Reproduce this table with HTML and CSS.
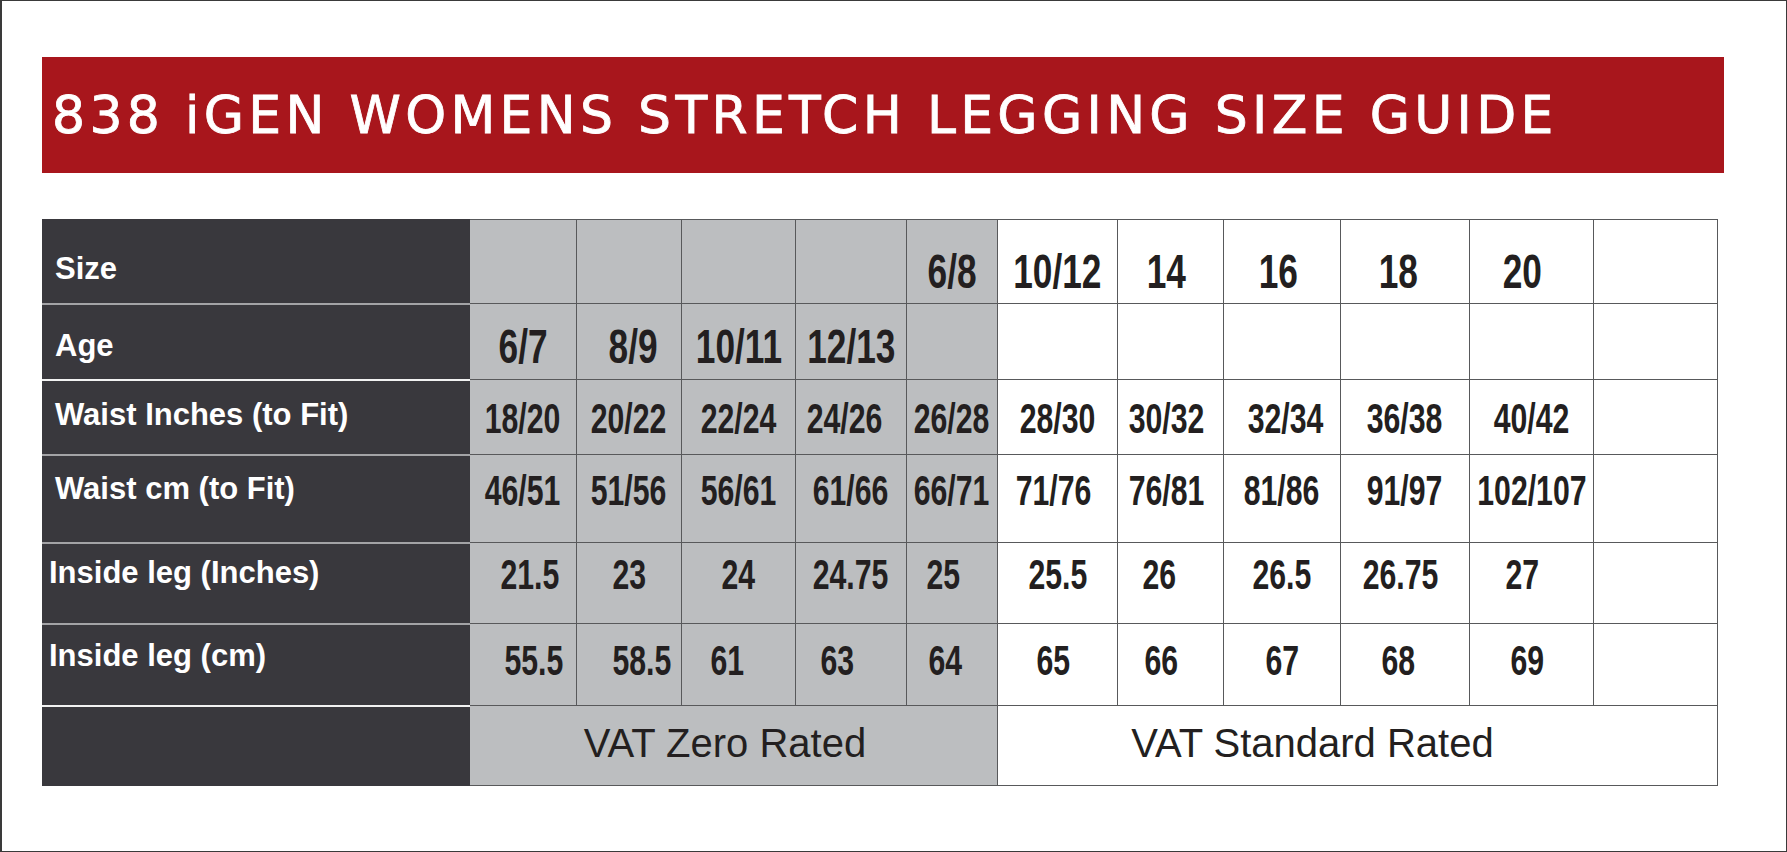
FILE: index.html
```html
<!DOCTYPE html>
<html lang="en">
<head>
<meta charset="utf-8">
<title>838 iGEN Womens Stretch Legging Size Guide</title>
<link rel="stylesheet" href="styles.css">
</head>
<body>
<div class="frame">
  <header class="banner">
    <h1 class="title">838 iGEN WOMENS STRETCH LEGGING SIZE GUIDE</h1>
  </header>

  <div class="chart">
    <div class="row row-size">
      <div class="label">Size</div>
      <div class="cell zero first"></div>
      <div class="cell zero"></div>
      <div class="cell zero"></div>
      <div class="cell zero"></div>
      <div class="cell zero"><span class="num">6/8</span></div>
      <div class="cell std"><span class="num">10/12</span></div>
      <div class="cell std dl0"><span class="num">14</span></div>
      <div class="cell std dl0"><span class="num">16</span></div>
      <div class="cell std dl1"><span class="num">18</span></div>
      <div class="cell std dl2"><span class="num">20</span></div>
      <div class="cell std end"></div>
    </div>

    <div class="row row-age">
      <div class="label sep">Age</div>
      <div class="cell zero first"><span class="num">6/7</span></div>
      <div class="cell zero dr0"><span class="num">8/9</span></div>
      <div class="cell zero"><span class="num">10/11</span></div>
      <div class="cell zero"><span class="num">12/13</span></div>
      <div class="cell zero"></div>
      <div class="cell std"></div>
      <div class="cell std"></div>
      <div class="cell std"></div>
      <div class="cell std"></div>
      <div class="cell std"></div>
      <div class="cell std end"></div>
    </div>

    <div class="row row-win">
      <div class="label sep sep-light">Waist Inches (to Fit)</div>
      <div class="cell zero first"><span class="num">18/20</span></div>
      <div class="cell zero"><span class="num">20/22</span></div>
      <div class="cell zero"><span class="num">22/24</span></div>
      <div class="cell zero dl1"><span class="num">24/26</span></div>
      <div class="cell zero"><span class="num">26/28</span></div>
      <div class="cell std"><span class="num">28/30</span></div>
      <div class="cell std dl0"><span class="num">30/32</span></div>
      <div class="cell std dr0"><span class="num">32/34</span></div>
      <div class="cell std"><span class="num">36/38</span></div>
      <div class="cell std"><span class="num">40/42</span></div>
      <div class="cell std end"></div>
    </div>

    <div class="row row-wcm">
      <div class="label sep">Waist cm (to Fit)</div>
      <div class="cell zero first"><span class="num">46/51</span></div>
      <div class="cell zero"><span class="num">51/56</span></div>
      <div class="cell zero"><span class="num">56/61</span></div>
      <div class="cell zero"><span class="num">61/66</span></div>
      <div class="cell zero"><span class="num">66/71</span></div>
      <div class="cell std dl0"><span class="num">71/76</span></div>
      <div class="cell std dl0"><span class="num">76/81</span></div>
      <div class="cell std"><span class="num">81/86</span></div>
      <div class="cell std"><span class="num">91/97</span></div>
      <div class="cell std"><span class="num">102/107</span></div>
      <div class="cell std end"></div>
    </div>

    <div class="row row-lin">
      <div class="label sep inset">Inside leg (Inches)</div>
      <div class="cell zero first dr1"><span class="num">21.5</span></div>
      <div class="cell zero"><span class="num">23</span></div>
      <div class="cell zero"><span class="num">24</span></div>
      <div class="cell zero"><span class="num">24.75</span></div>
      <div class="cell zero dl2"><span class="num">25</span></div>
      <div class="cell std"><span class="num">25.5</span></div>
      <div class="cell std dl3"><span class="num">26</span></div>
      <div class="cell std"><span class="num">26.5</span></div>
      <div class="cell std dl0"><span class="num">26.75</span></div>
      <div class="cell std dl2"><span class="num">27</span></div>
      <div class="cell std end"></div>
    </div>

    <div class="row row-lcm">
      <div class="label sep inset">Inside leg (cm)</div>
      <div class="cell zero first dr2"><span class="num">55.5</span></div>
      <div class="cell zero dr3"><span class="num">58.5</span></div>
      <div class="cell zero dl3"><span class="num">61</span></div>
      <div class="cell zero dl4"><span class="num">63</span></div>
      <div class="cell zero dl1"><span class="num">64</span></div>
      <div class="cell std dl0"><span class="num">65</span></div>
      <div class="cell std dl2"><span class="num">66</span></div>
      <div class="cell std"><span class="num">67</span></div>
      <div class="cell std dl1"><span class="num">68</span></div>
      <div class="cell std dl0"><span class="num">69</span></div>
      <div class="cell std end"></div>
    </div>

    <div class="row row-vat">
      <div class="label sep sep-light"></div>
      <div class="cell zero first span-zero">VAT Zero Rated</div>
      <div class="cell std end span-std">VAT Standard Rated</div>
    </div>
  </div>
</div>
</body>
</html>
```

FILE: styles.css
```css
* {
  box-sizing: border-box;
}

html,
body {
  margin: 0;
  padding: 0;
  background: #ffffff;
}

.frame {
  width: 1787px;
  height: 852px;
  border: 1px solid #3a3a3a;
  border-left-width: 2px;
  padding: 56px 0 0 40px;
  background: #ffffff;
}

/* ---------- Title banner ---------- */
.banner {
  width: 1682px;
  height: 116px;
  background: #a8161c;
  display: flex;
  align-items: center;
  padding-left: 10px;
}

.title {
  margin: 0;
  color: #ffffff;
  font-family: "DejaVu Sans", "Liberation Sans", sans-serif;
  font-weight: 400;
  font-size: 52px;
  line-height: 1;
  letter-spacing: 4.3px;
  white-space: nowrap;
  -webkit-text-stroke: 0.8px #ffffff;
}

/* ---------- Size chart ---------- */
.chart {
  margin-top: 46px;
  width: 1676px;
  display: grid;
  grid-template-columns: 428px 106px 105px 114px 111px 91px 120px 106px 117px 129px 124px 125px;
  grid-template-rows: 84px 76px 75px 88px 81px 82px 81px;
}

.row {
  display: contents;
}

.label {
  background: #39383d;
  color: #ffffff;
  font-family: "Liberation Sans", Arial, sans-serif;
  font-weight: 700;
  font-size: 31px;
  line-height: 1;
  display: flex;
  align-items: center;
  padding-left: 13px;
  white-space: nowrap;
}

.label.inset {
  padding-left: 7px;
}

.label.sep {
  border-top: 2px solid #a3a3a6;
}

.label.sep-light {
  border-top-color: #f2f2f2;
}

.cell {
  display: flex;
  align-items: center;
  justify-content: center;
  border-top: 1px solid #58595b;
  border-left: 1px solid #58595b;
  color: #231f20;
  font-family: "Liberation Sans", Arial, sans-serif;
  font-weight: 700;
  font-size: 42px;
  line-height: 1;
  white-space: nowrap;
}

.cell.first {
  border-left: 0;
}

.cell.end {
  border-right: 1px solid #58595b;
}

.zero {
  background: #bcbec0;
}

.std {
  background: #ffffff;
}

.num {
  display: inline-block;
  transform: scaleX(0.72);
}

/* row specific type size and vertical placement */
.row-size .cell,
.row-age .cell {
  font-size: 49px;
}

.row-size .label { padding-top: 15px; }
.row-size .cell { padding-top: 20px; }

.row-age .label { padding-top: 6px; }
.row-age .cell { padding-top: 10px; }

.row-win .label { padding-bottom: 7px; }
.row-win .cell { padding-top: 3px; }

.row-wcm .label { padding-bottom: 22px; }
.row-wcm .cell { padding-bottom: 16px; }

.row-lin .label { padding-bottom: 23px; }
.row-lin .cell { padding-bottom: 16px; }

.row-lcm .label { padding-bottom: 20px; }
.row-lcm .cell { padding-bottom: 7px; }

.row-vat .cell {
  border-bottom: 1px solid #58595b;
  font-weight: 400;
  font-size: 40px;
  padding-bottom: 6px;
}

.span-zero {
  grid-column: 2 / 7;
  padding-right: 17px;
}

.span-std {
  grid-column: 7 / 13;
  padding-right: 90px;
}

/* small horizontal nudges matching the printed chart */
.dl0 { padding-right: 8px; }
.dl1 { padding-right: 13px; }
.dl2 { padding-right: 18px; }
.dl3 { padding-right: 22px; }
.dl4 { padding-right: 27px; }
.dr0 { padding-left: 8px; }
.dr1 { padding-left: 14px; }
.dr2 { padding-left: 21px; }
.dr3 { padding-left: 26px; }
```
